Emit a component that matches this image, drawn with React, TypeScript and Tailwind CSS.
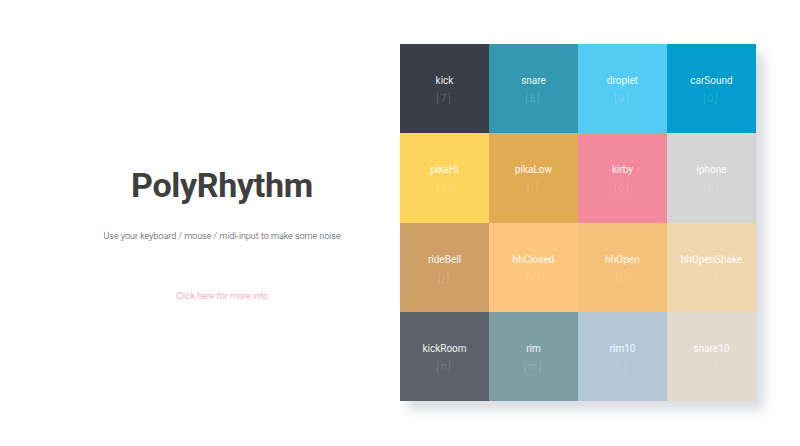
const pads = [
  { name: 'kick', key: '7', bg: 'bg-[#3b3e47]' },
  { name: 'snare', key: '8', bg: 'bg-[#3399b0]' },
  { name: 'droplet', key: '9', bg: 'bg-[#54cbf2]' },
  { name: 'carSound', key: '0', bg: 'bg-[#029dcc]' },
  { name: 'pikaHi', key: 'u', bg: 'bg-[#fdd55d]' },
  { name: 'pikaLow', key: 'i', bg: 'bg-[#dfac54]' },
  { name: 'kirby', key: 'o', bg: 'bg-[#f3899c]' },
  { name: 'iphone', key: 'p', bg: 'bg-[#d5d5d5]' },
  { name: 'rideBell', key: 'j', bg: 'bg-[#cf9f68]' },
  { name: 'hhClosed', key: 'k', bg: 'bg-[#fdc67c]' },
  { name: 'hhOpen', key: 'l', bg: 'bg-[#f6c27b]' },
  { name: 'hhOpenShake', key: ';', bg: 'bg-[#f0d7b0]' },
  { name: 'kickRoom', key: 'n', bg: 'bg-[#5e626a]' },
  { name: 'rim', key: 'm', bg: 'bg-[#7e9ea5]' },
  { name: 'rim10', key: ',', bg: 'bg-[#b4c7d7]' },
  { name: 'snare10', key: '.', bg: 'bg-[#e3dacf]' },
];

export default function App() {
  return (
    <div className="flex h-[446px] w-[800px] bg-white font-['Roboto',sans-serif]">
      {/* Intro */}
      <div className="flex w-[400px] flex-col items-center pl-[44px] pt-[163px]">
        <h1 className="text-[34px] font-bold leading-[44px] tracking-[-0.3px] text-[#3f3f3f]">PolyRhythm</h1>
        <p className="mt-[23px] text-[9px] font-light leading-[12px] text-[#444]">
          Use your keyboard / mouse / midi-input to make some noise
        </p>
        <a href="#" className="mt-[48px] text-[9px] font-light leading-[12px] text-[#f285b0]">
          Click here for more info
        </a>
      </div>

      {/* Pads */}
      <div className="pt-[44px]">
        <div className="grid w-[356px] grid-cols-4 shadow-[8px_9px_10px_rgba(90,100,120,0.22)]">
          {pads.map(p => (
            <div
              key={p.name}
              className={`${p.bg} flex h-[89.25px] flex-col items-center pt-[30px]`}
            >
              <span className="text-[10px] leading-[14px] text-white/90">{p.name}</span>
              <span className="mt-[4px] text-[10px] font-light leading-[13px] tracking-[2px] text-white/25">
                [{p.key}]
              </span>
            </div>
          ))}
        </div>
      </div>
    </div>
  );
}
